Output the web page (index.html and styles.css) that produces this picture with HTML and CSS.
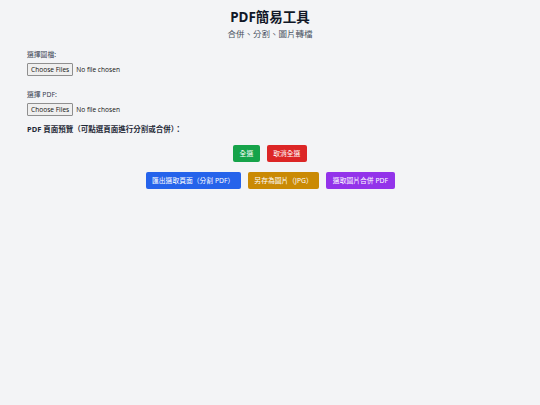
FILE: index.html
```html
<!DOCTYPE html>
<html lang="zh-Hant">
<head>
<meta charset="utf-8">
<title>PDF簡易工具</title>
<link rel="stylesheet" href="styles.css">
</head>
<body>
<div class="page">
  <header class="head">
    <h1 class="title">PDF簡易工具</h1>
    <p class="subtitle">合併、分割、圖片轉檔</p>
  </header>
  <section class="field">
    <label class="label">選擇圖檔:</label>
    <input class="file" type="file" multiple accept="image/*">
  </section>
  <section class="field">
    <label class="label">選擇 PDF:</label>
    <input class="file" type="file" multiple accept="application/pdf">
  </section>
  <h2 class="preview-title">PDF 頁面預覽（可點選頁面進行分割或合併）：</h2>
  <div class="row row-select">
    <button class="btn green">全選</button>
    <button class="btn red">取消全選</button>
  </div>
  <div class="row row-actions">
    <button class="btn blue">匯出選取頁面（分割 PDF）</button>
    <button class="btn yellow">另存為圖片（JPG）</button>
    <button class="btn purple">選取圖片合併 PDF</button>
  </div>
</div>
</body>
</html>
```
FILE: styles.css
```css
html, body {
  margin: 0;
  padding: 0;
  background: #f3f4f6;
  font-family: "Noto Sans", "Noto Sans CJK TC", sans-serif;
  color: #1f2937;
}
.page {
  padding: 8px 27px;
}
.head {
  text-align: center;
}
.title {
  margin: 0;
  font-size: 13.5px;
  line-height: 18px;
  font-weight: 700;
  color: #111827;
}
.subtitle {
  margin: 2px 0 0;
  font-size: 8.5px;
  line-height: 12px;
  color: #4b5563;
}
.field {
  margin-top: 10px;
}
.field + .field {
  margin-top: 14px;
}
.label {
  display: block;
  font-size: 6.8px;
  line-height: 10px;
  color: #374151;
  margin-bottom: 3px;
}
.file {
  display: block;
  font-size: 6.6px;
  font-family: "Open Sans", "Noto Sans", sans-serif;
  color: #111;
  height: 13px;
  padding: 0;
  margin: 0;
}
.file::file-selector-button {
  font: inherit;
  height: 13px;
  padding: 0 3px;
  margin: 0 3px 0 0;
  border: 1px solid #8f8f8f;
  border-radius: 1px;
  background: #efefef;
  color: #111;
}
.preview-title {
  margin: 8px 0 0;
  font-size: 7.5px;
  line-height: 10px;
  font-weight: 700;
  color: #1f2937;
}
.row {
  display: flex;
  justify-content: center;
  gap: 7px;
}
.row-select {
  margin-top: 11px;
}
.row-actions {
  margin-top: 10px;
}
.btn {
  border: 0;
  border-radius: 2px;
  color: #fff;
  font-family: "Noto Sans", "Noto Sans CJK TC", sans-serif;
  font-size: 6.8px;
  line-height: 17px;
  height: 17px;
  padding: 0 6.5px;
}
.green { background: #16a34a; }
.red { background: #dc2626; }
.blue { background: #2563eb; }
.yellow { background: #ca8a04; }
.purple { background: #9333ea; }
```
